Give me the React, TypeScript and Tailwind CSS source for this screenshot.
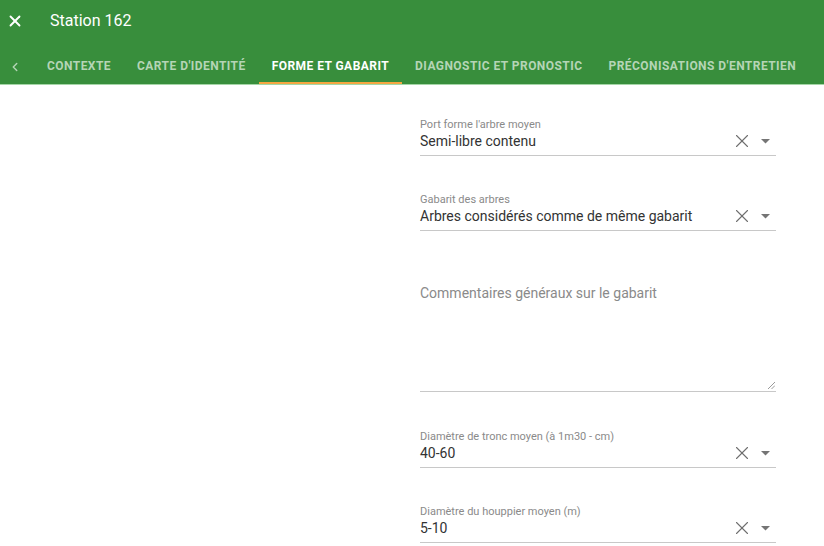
import { X, ChevronLeft } from 'lucide-react';

const tabs = [
  'Contexte',
  "Carte d'identité",
  'Forme et gabarit',
  'Diagnostic et pronostic',
  "Préconisations d'entretien",
];

const SelectField = ({ label, value, className = '' }: { label: string; value: string; className?: string }) => (
  <div className={`border-b border-[#c8c8c8] pb-[4px] ${className}`}>
    <div className="text-[11px] leading-[13px] text-[#8a8a8a]">{label}</div>
    <div className="flex items-center h-[20px]">
      <span className="flex-1 text-[14px] leading-[20px] text-[#333333]">{value}</span>
      <X className="w-[22px] h-[22px] text-[#6e6e6e] mr-[8px]" strokeWidth={1.2} />
      <svg width="9" height="5" viewBox="0 0 9 5" className="mr-[6px]">
        <path d="M0 0 L9 0 L4.5 4.5 Z" fill="#757575" />
      </svg>
    </div>
  </div>
);

const App = () => {
  return (
    <div className="w-[824px] h-[546px] overflow-hidden bg-white font-['Roboto',sans-serif]">
      <header className="bg-[#388e3c] border-b border-[#a5d6a7]">
        <div className="h-[42px] flex items-center">
          <X className="w-[18px] h-[18px] text-white ml-[6px]" strokeWidth={2.5} />
          <h1 className="ml-[26px] text-[16px] text-white">Station 162</h1>
        </div>
        <nav className="h-[42px] flex items-stretch">
          <div className="w-[34px] flex items-center pl-[8px] pt-[7px]">
            <ChevronLeft className="w-[14px] h-[14px] text-[#b3d4b4]" strokeWidth={2.5} />
          </div>
          {tabs.map((t, i) => (
            <div
              key={t}
              className={`px-[13px] pt-[7px] flex items-center text-[12px] font-bold uppercase tracking-[0.45px] border-b-2 ${
                i === 2 ? 'text-white border-[#f5a742]' : 'text-[#b5d5b6] border-transparent'
              }`}
            >
              {t}
            </div>
          ))}
        </nav>
      </header>

      <div className="flex">
        <div className="w-[420px]" />
        <div className="w-[356px] pt-[33px]">
          <SelectField label="Port forme l'arbre moyen" value="Semi-libre contenu" />
          <SelectField label="Gabarit des arbres" value="Arbres considérés comme de même gabarit" className="mt-[37px]" />
          <div className="mt-[37px] relative border-b border-[#c8c8c8] h-[124px] pt-[15px]">
            <div className="text-[14px] leading-[20px] text-[#8a8a8a]">Commentaires généraux sur le gabarit</div>
            <svg width="7" height="7" viewBox="0 0 7 7" className="absolute right-[1px] bottom-[2px]">
              <path d="M7 0 L0 7 M7 3.5 L3.5 7" stroke="#9a9a9a" strokeWidth="1" />
            </svg>
          </div>
          <SelectField label="Diamètre de tronc moyen (à 1m30 - cm)" value="40-60" className="mt-[38px]" />
          <SelectField label="Diamètre du houppier moyen (m)" value="5-10" className="mt-[37px]" />
        </div>
      </div>
    </div>
  );
};

export default App;
